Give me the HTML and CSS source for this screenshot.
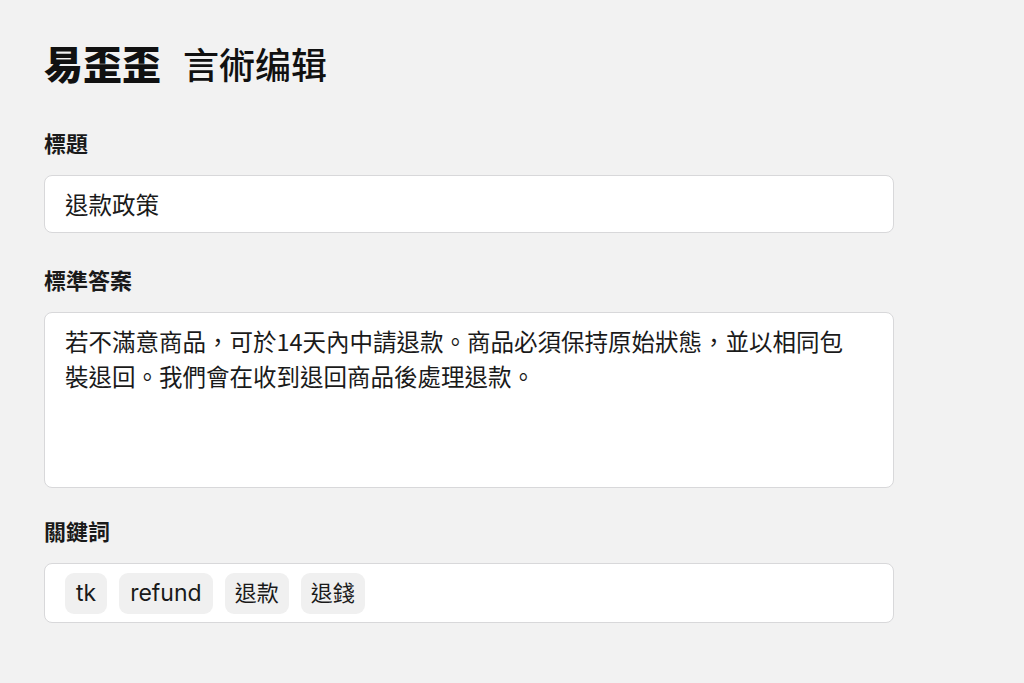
FILE: index.html
```html
<!DOCTYPE html>
<html lang="zh-Hant">
<head>
    <meta name="viewport" content="width=device-width, initial-scale=1">
    <link rel="stylesheet" href="styles.css">
    <title>易歪歪 話術编辑</title>
</head>

<body>
<div class="editWrapper">
    <h1><span class="brand">易歪歪</span><span class="sub">言術编辑</span></h1>

    <label class="fieldLabel">標題</label>
    <div class="field">退款政策</div>

    <label class="fieldLabel">標準答案</label>
    <div class="field area">若不滿意商品，可於14天內中請退款。商品必須保持原始狀態，並以相同包裝退回。我們會在收到退回商品後處理退款。</div>

    <label class="fieldLabel">關鍵詞</label>
    <div class="field tags">
        <span class="tag">tk</span>
        <span class="tag">refund</span>
        <span class="tag cjk">退款</span>
        <span class="tag cjk">退錢</span>
    </div>
</div>
</body>
</html>
```

FILE: styles.css
```css
html, body {
    margin: 0;
    padding: 0;
    background: #f2f2f2;
    color: #1a1a1a;
    font-family: "Noto Sans CJK TC", "Noto Sans", sans-serif;
}

.editWrapper {
    width: 850px;
    padding: 34px 0 0 44px;
    display: flex;
    flex-direction: column;
}
.editWrapper > h1 {
    margin: 0 0 36px 0;
    font-size: 36px;
    line-height: 56px;
    font-weight: 500;
    color: #111;
}
.brand {
    font-weight: 900;
    font-size: 39px;
}
.sub {
    margin-left: 22px;
}

.fieldLabel {
    font-size: 22px;
    font-weight: 700;
    line-height: 30px;
    margin: 0 0 18px 0;
    color: #1a1a1a;
}

.field {
    box-sizing: border-box;
    background: #fff;
    border: 1px solid #d8d8da;
    border-radius: 8px;
    font-size: 23.5px;
    line-height: 34px;
    padding: 11px 34px 11px 20px;
    min-height: 58px;
    margin-bottom: 31px;
}
.field.area {
    height: 176px;
    line-height: 35px;
    padding-top: 11px;
    margin-bottom: 27px;
}
.field.tags {
    display: flex;
    gap: 12px;
    align-items: center;
    padding: 9px 20px;
    height: 60px;
}
.tag {
    background: #f0f0f0;
    border-radius: 9px;
    padding: 3px 11px;
    font-size: 23px;
    line-height: 35px;
    font-family: "Inter", "Noto Sans CJK TC", sans-serif;
}
.tag.cjk {
    font-size: 22px;
    padding: 3px 10px;
}
```
